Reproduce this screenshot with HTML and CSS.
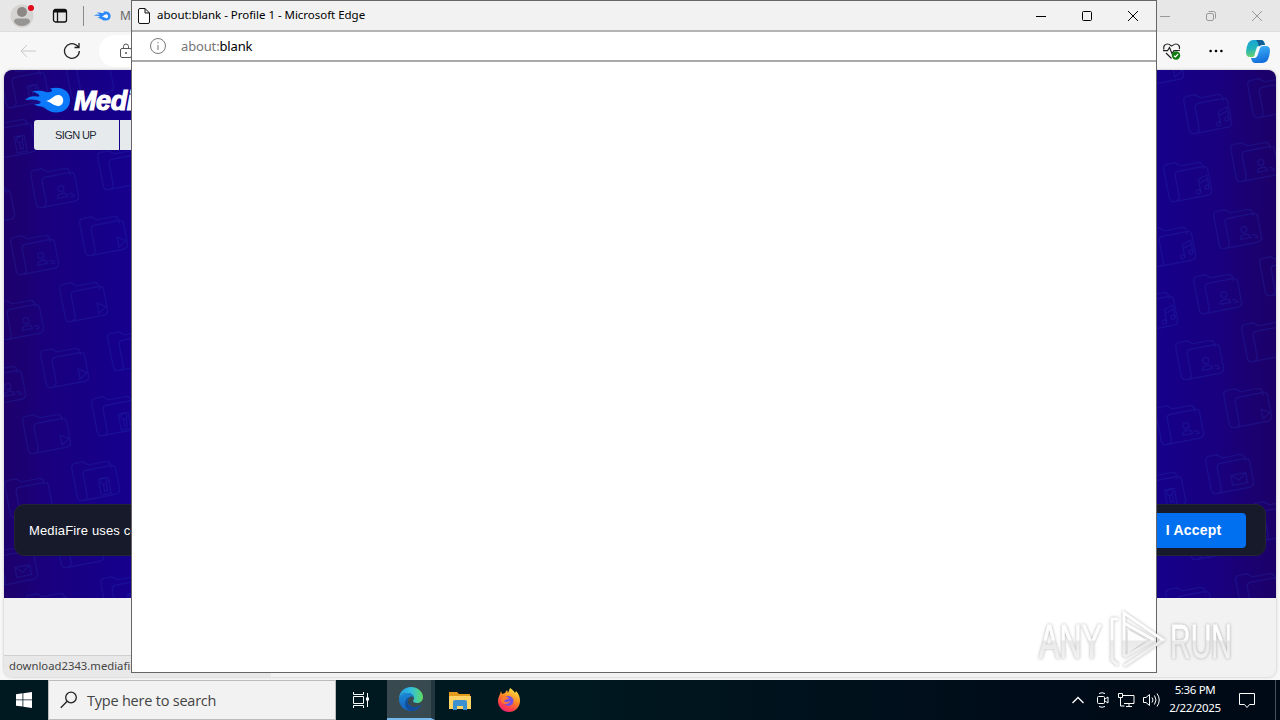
FILE: index.html
```html
<!DOCTYPE html>
<html lang="en">
<head>
  <meta charset="utf-8">
  <title>about:blank - Profile 1 - Microsoft Edge</title>
  <link rel="stylesheet" href="styles.css">
</head>
<body>
  <div class="desktop">
    <div class="browser">
      <div class="tabs">
        <div class="avatar">
          <svg width="24" height="24" viewBox="0 0 24 24"><circle cx="12" cy="12" r="11.5" fill="#d6d4d2"/><circle cx="12" cy="8" r="5" fill="#8b8886"/><path d="M4 18q0-3.500 3.500-3.500h9q3.500 0 3.500 3.500-3 4-8 4t-8-4z" fill="#979593"/></svg>
          <span class="dot"></span>
        </div>
        <svg class="workspaces" width="16" height="16" viewBox="0 0 16 16" fill="none" stroke="#111" stroke-width="1.300"><rect x="1.500" y="1.500" width="13" height="12.500" rx="2"/><path d="M2 3h12" stroke-width="3"/><path d="M5.500 4v10"/></svg>
        <span class="divider"></span>
        <svg class="favicon" width="17" height="14" viewBox="0 0 46 26"><use href="#flame"/></svg>
        <span class="tab-title">MediaFire</span>
        <div class="controls inactive">
          <svg width="46" height="32" viewBox="0 0 46 32"><path d="M18 16.500h10"/></svg>
          <svg width="46" height="32" viewBox="0 0 46 32"><rect x="18.500" y="13.500" width="7" height="7" rx="1.500"/><path d="M20.500 11.500h5a2 2 0 0 1 2 2v5"/></svg>
          <svg width="46" height="32" viewBox="0 0 46 32"><path d="M18 11l10 10m0-10l-10 10"/></svg>
        </div>
      </div>
      <div class="toolbar">
        <svg class="back" width="16" height="14" viewBox="0 0 16 14" fill="none" stroke="#c8c8c8"><path d="M16 7H1m6-6L1 7l6 6"/></svg>
        <svg class="reload" width="18" height="18" viewBox="0 0 18 18" fill="none" stroke="#222" stroke-width="1.300"><path d="M16.300 9a7.400 7.400 0 1 1-2.700-5.700L16 5.500M16 1v4.500h-4.500"/></svg>
        <div class="address">
          <svg width="14" height="16" viewBox="0 0 14 16" fill="none" stroke="#555"><rect x="1.500" y="5.500" width="11" height="9" rx="1.500"/><path d="M4.500 5V3.500a2.500 2.500 0 0 1 5 0V5"/><circle cx="7" cy="10" r=".6" fill="#555"/></svg>
        </div>
        <div class="tools">
          <svg width="18" height="18" viewBox="0 0 18 18" fill="none" stroke="#222" stroke-width="1.200"><path d="M1 7.500C0 4 2 2 4.500 2 7 2 8 4 8.700 4 9.500 4 10.500 2 13 2c2.500 0 4.200 2.500 3.200 5M0 8.700h4.500l2-3.200 2.500 6 2-3h6M3 11l5.500 5.500"/><circle cx="13" cy="13.500" r="4.200" fill="#107c10" stroke="none"/><path d="M11 13.700l1.400 1.300 2.700-3" stroke="#fff"/></svg>
          <svg width="14" height="4" viewBox="0 0 14 4"><circle cx="1.600" cy="2" r="1.300"/><circle cx="7" cy="2" r="1.300"/><circle cx="12.400" cy="2" r="1.300"/></svg>
          <svg width="24" height="23" viewBox="0 0 24 23">
            <defs>
              <linearGradient id="coA" x2=".2" y2="1"><stop offset="0" stop-color="#18a2d8"/><stop offset=".55" stop-color="#22b5bb"/><stop offset="1" stop-color="#68d070"/></linearGradient>
              <linearGradient id="coB" x2=".3" y2="1"><stop offset="0" stop-color="#42b9fa"/><stop offset="1" stop-color="#1570dc"/></linearGradient>
            </defs>
            <path d="M7 0h8q3 0 4 5h-3q-3 0-4 4l-2 6q-1 2-3 2H4q-4 0-4-5Q1 0 7 0z" fill="url(#coA)"/>
            <path d="M10 0h5q3 0 4 5h-3q-2 0-3 2-1-5-3-7z" fill="#125f95"/>
            <path d="M17 23H9q-3 0-4-5h3q3 0 4-4l2-6q1-2 3-2h3q4 0 4 5-1 12-7 12z" fill="url(#coB)"/>
            <path d="M11 7q1-1 3-1-1 1-2 5l-1 4q-1 2-2 3-1 0-2-1 2-1 2-4z" fill="#f4faff"/>
          </svg>
        </div>
      </div>
      <div class="page">
        <div class="hero">
          <svg class="pattern" width="1272" height="528" viewBox="4 70 1272 528" fill="none">
            <defs>
              <g id="folder"><path d="M-15 20q-5 0-5-5v-28q0-5 4-5h8l5 4h17q5 0 5 5v3M-15 20q5 0 5-5v-20q0-4 4-4h25q4 0 4 4v20q0 5-5 5z"/></g>
              <g id="person"><use href="#folder"/><circle cx="7" cy="5" r="3"/><path d="M2 14q0-4 5-4t5 4zM14 12q4-1 5 3h-4"/></g>
              <g id="play"><use href="#folder"/><path d="M14 7l8 5-8 5z"/></g>
              <g id="music"><use href="#folder"/><path d="M12 15V3l9-3v12M12 7l9-3"/><circle cx="10" cy="15" r="2"/><circle cx="19" cy="12" r="2"/></g>
              <g id="lock"><use href="#folder"/><path d="M4 18V2h10v16z"/><circle cx="9" cy="5" r="3"/><path d="M8 8v7h3V8"/></g>
              <g id="mail"><use href="#folder"/><path d="M2 5h15v10H2zl7 6 8-6"/></g>
            </defs>
            <g id="art" class="lines"></g>
          </svg>
          <div class="brand">
            <svg width="46" height="26" viewBox="0 0 46 26">
              <defs><g id="flame"><path d="M0 13C3 10 7 8.500 12 9.500 14 10 15 9 14 8 12 6 10 5 7 5c6-2 10-1 14 0 3 .5 5 0 6-1 0-1-1-2-2-2.500C37-1 45 4 45 13c0 8-6 12.500-14 12.500-8 0-10-5-15-6-3-.5-5-.5-7-2.500 3 .5 6 0 7-2C12 12 6 12 0 13z" fill="#0c78fa"/><path d="M21 14c5-1 8-6 12-6 7 0 7 11 0 11-4 0-7-4-12-5z" fill="#fff"/></g></defs>
              <use href="#flame"/>
            </svg>
            <span>MediaFire</span>
          </div>
          <div class="account"><span class="signup">SIGN UP</span><span class="login">LOG IN</span></div>
          <div class="consent">
            <span>MediaFire uses cookies</span>
            <button>I Accept</button>
          </div>
        </div>
        <div class="status">download2343.mediafire.com</div>
      </div>
    </div>

    <div class="taskbar">
      <div class="start"><svg width="16" height="16" viewBox="0 0 16 16" fill="#fff"><path d="M0 2.200L6.500 1.300v6.200H0zM7.300 1.200L16 0v7.500H7.300zM0 8.300h6.500v6.300L0 13.700zM7.300 8.300H16V16l-8.700-1.200z"/></svg></div>
      <div class="search">
        <svg width="18" height="18" viewBox="0 0 18 18" fill="none" stroke="#222" stroke-width="1.300"><circle cx="11" cy="6.500" r="5.300"/><path d="M7.200 10.300L.8 16.700"/></svg>
        <span>Type here to search</span>
      </div>
      <div class="task"><svg width="18" height="18" viewBox="0 0 18 18" fill="none" stroke="#fff"><path d="M1.500 1v2.500h10V1M1.500 17v-2.500h10V17M1.500 5.500h10v7h-10zM15.500 2v14"/><path d="M14 6.500h3v3h-3z" fill="#fff" stroke="none"/></svg></div>
      <div class="task active">
        <svg width="24" height="24" viewBox="0 0 24 24">
          <defs>
            <linearGradient id="edA" x2="1"><stop offset="0" stop-color="#2399dc"/><stop offset=".5" stop-color="#31bde0"/><stop offset="1" stop-color="#5fdc62"/></linearGradient>
            <linearGradient id="edB" y2="1" x2=".3"><stop offset="0" stop-color="#1c8bd8"/><stop offset="1" stop-color="#1560b8"/></linearGradient>
          </defs>
          <path d="M0 12C0 5 5 0 12 0s12 5 12 10c0 4-3 6-6 6-2 0-4-1-4-2s1-1 1-3c0-3-3-5-7-5-4 0-7 3-8 6z" fill="url(#edA)"/>
          <path d="M0 12c1-4 4-6 8-6 4 0 7 2 7 5-1-1-2-2-4-1-5 3-2 9 3 10 3 1 6-1 8-2-2 4-6 6-10 6C5 24 0 19 0 12z" fill="url(#edB)"/>
          <path d="M11 10c-5 3-2 9 3 10 3 1 6-1 8-2-2 4-6 6-10 6-8-2-7-13-1-14z" fill="#124d9b"/>
        </svg>
      </div>
      <div class="task"><svg width="22" height="19" viewBox="0 0 22 19"><path d="M0 1h8l2 2h11v5H0z" fill="#e29b1d"/><path d="M0 5h22v13H0z" fill="#fcd364"/><path d="M4 19v-8q0-2 2-2h10q2 0 2 2v8h-4v-4H8v4z" fill="#3b91cf"/></svg></div>
      <div class="task"><svg width="24" height="24" viewBox="0 0 24 24">
        <defs><linearGradient id="ff" x1=".8" x2=".3" y2="1"><stop offset="0" stop-color="#fff04a"/><stop offset=".45" stop-color="#ff8b22"/><stop offset=".8" stop-color="#ff3c4c"/><stop offset="1" stop-color="#e52374"/></linearGradient></defs>
        <path d="M4 3l1 3 3-1 2-3 1 3 2-5c2 1 4 3 5 5l1-2c3 3 4 6 4 10a11 11 0 0 1-22 0C1 9 3 7 4 3z" fill="url(#ff)"/><circle cx="11.500" cy="13" r="5" fill="#7650e1"/><path d="M5 9c3-2 5 0 7 1-1 2-4 1-5 3 2 2 4 1 6 0-1 4-7 4-9 0z" fill="#ff7930"/></svg></div>
      <div class="tray">
        <svg width="12" height="8" viewBox="0 0 12 8"><path d="M.5 7L6 1.500 11.500 7" stroke-width="1.300"/></svg>
        <svg width="12" height="16" viewBox="0 0 12 16"><rect x=".5" y="4.500" width="7" height="7" rx="1"/><path d="M8 7l3-2v6L8 9M2 1.500Q5 0 8 1.500M2 14.500Q5 16 8 14.500"/></svg>
        <svg width="17" height="14" viewBox="0 0 17 14"><path d="M5 2.500h11v8H6M8 13.500h6M11 10.500v3M.5.500h4v4h-4zM2.500 5v8h4"/></svg>
        <svg width="17" height="14" viewBox="0 0 17 14"><path d="M.5 4.500H3l3.500-3v11L3 9.500H.5zM9 4.500q2 2.500 0 5M11.500 2.500q3 4.500 0 9M14 .500q4.500 6.500 0 13"/></svg>
      </div>
      <div class="clock"><span>5:36 PM</span><span>2/22/2025</span></div>
      <svg class="notice" width="17" height="17" viewBox="0 0 17 17" fill="none" stroke="#fff"><path d="M.5 1.500h15v11h-5l-2.500 3-2.500-3h-5z"/></svg>
      <div class="peek"></div>
    </div>

    <div class="popup">
      <div class="titlebar">
        <svg width="12" height="16" viewBox="0 0 12 16" fill="#fff" stroke="#111"><path d="M.5 2q0-1.500 1.500-1.500h5L11.500 5v9q0 1.500-1.500 1.500H2Q.5 15.500.5 14zM7 .5V5h4.500"/></svg>
        <span>about:blank - Profile 1 - Microsoft Edge</span>
        <div class="controls">
          <svg width="46" height="30" viewBox="0 0 46 30"><path d="M18 15.500h10"/></svg>
          <svg width="46" height="30" viewBox="0 0 46 30"><rect x="18.500" y="10.500" width="9" height="9" rx="1"/></svg>
          <svg width="46" height="30" viewBox="0 0 46 30"><path d="M18 10l10 10m0-10L18 20"/></svg>
        </div>
      </div>
      <div class="location">
        <svg width="16" height="16" viewBox="0 0 16 16" fill="none" stroke="#777"><circle cx="8" cy="8" r="7.500"/><path d="M8 7v5M8 4v1.300"/></svg>
        <span><i>about:</i>blank</span>
      </div>
    </div>

    <svg class="watermark" width="216" height="66" viewBox="0 0 216 66">
      <defs><linearGradient id="wm" gradientUnits="userSpaceOnUse" x1="0" y1="10" x2="0" y2="56"><stop offset="0" stop-color="#fff"/><stop offset=".48" stop-color="#fdfdfd"/><stop offset=".5" stop-color="#e9e9e9"/><stop offset="1" stop-color="#f5f5f5"/></linearGradient></defs>
      <text x="3" y="50" textLength="63" lengthAdjust="spacingAndGlyphs">ANY</text>
      <text x="134" y="50" textLength="62" lengthAdjust="spacingAndGlyphs">RUN</text>
      <path d="M88 48V5l39 27-39 26M82 11h-6v41l6 5M88 15l30 17M88 49l30-17" fill="none" stroke="url(#wm)" stroke-width="3"/>
      <path d="M92 22l18 10-18 13z"/>
    </svg>
  </div>

  <script>
    // type, center x, center y
    var folders = [
      ['lock', 25, 87], ['folder', 90, 78], ['lock', 12, 138], ['folder', 122, 169],
      ['person', 55, 187], ['folder', -9, 205], ['play', 104, 235], ['person', 35, 254],
      ['play', 84, 301], ['person', 20, 319], ['folder', 132, 350], ['play', 65, 367],
      ['person', 2, 385], ['lock', 116, 415], ['play', 47, 433], ['lock', 96, 480],
      ['folder', 29, 497], ['folder', 80, 547], ['mail', 14, 565], ['lock', 125, 595], ['folder', 50, 612],
      ['play', 1160, 65], ['music', 1208, 113], ['folder', 1272, 97], ['person', 1255, 161],
      ['music', 1188, 181], ['music', 1172, 246], ['person', 1238, 228], ['person', 1218, 293],
      ['folder', 1284, 275], ['music', 1154, 311], ['person', 1200, 359], ['folder', 1266, 341],
      ['person', 1180, 424], ['play', 1248, 407], ['mail', 1230, 473], ['lock', 1162, 491],
      ['lock', 1277, 520], ['folder', 1210, 539], ['folder', 1260, 592], ['folder', 1190, 606]
    ];
    document.getElementById('art').innerHTML = folders.map(function (f) {
      return '<use href="#' + f[0] + '" transform="translate(' + (f[1] - 2) + ' ' + (f[2] - 2) + ') rotate(-11)"/>';
    }).join('');
  </script>
</body>
</html>
```
FILE: styles.css
```css
* {
  box-sizing: border-box;
}

body {
  margin: 0;
  font-family: "Noto Sans", "Open Sans", sans-serif;
}

svg {
  display: block;
  flex: none;
}

.desktop {
  position: relative;
  display: flex;
  flex-direction: column;
  width: 1280px;
  height: 720px;
  overflow: hidden;
  white-space: nowrap;
}

.browser {
  display: flex;
  flex-direction: column;
  height: 680px;
  background: #f7f7f7;
}

.tabs {
  display: flex;
  align-items: center;
  height: 32px;
  padding-left: 10px;
  background: #e7e7e7;
  border-bottom: 1px solid #dedede;
}

.avatar {
  position: relative;
}

.dot {
  position: absolute;
  top: 1px;
  left: 18px;
  width: 6px;
  height: 6px;
  border-radius: 50%;
  background: #e00b1c;
}

.workspaces {
  margin-left: 18px;
}

.divider {
  width: 1px;
  height: 20px;
  margin: 0 10px 0 15px;
  background: #8a8a8a;
}

.favicon {
  opacity: .85;
}

.tab-title {
  width: 12px;
  margin-left: 9px;
  overflow: hidden;
  font-size: 12px;
  color: #666;
}

.controls {
  display: flex;
  margin-left: auto;
  fill: none;
  stroke: #000;
}

.inactive {
  stroke: #999;
}

.toolbar {
  display: flex;
  align-items: center;
  height: 38px;
  padding-left: 20px;
}

.reload {
  margin-left: 27px;
}

.address {
  display: flex;
  align-items: center;
  width: 1020px;
  height: 32px;
  margin-left: 18px;
  padding-left: 20px;
  border-radius: 16px;
  background: #fff;
}

.tools {
  display: flex;
  align-items: center;
  margin-left: auto;
  padding-right: 10px;
}

.tools svg:nth-child(2) {
  margin: 0 23px 0 28px;
}

.page {
  position: relative;
  width: 1272px;
  height: 607px;
  margin-left: 4px;
  border-radius: 8px;
  overflow: hidden;
  background: #f2f2f2;
  box-shadow: 0 0 3px #bbb;
}

.hero {
  position: relative;
  display: flex;
  flex-direction: column;
  height: 528px;
  background: linear-gradient(90deg, #1d006b, #190080 4%, #15008f 11%, #15008f 89%, #190080 95%, #1c0068);
}

.pattern {
  position: absolute;
  top: 0;
  left: 0;
}

.lines {
  stroke: #2635b5;
  stroke-opacity: .26;
  stroke-width: 1.4;
}

.brand {
  position: relative;
  display: flex;
  align-items: center;
  height: 26px;
  margin: 17px 0 0 21px;
  color: #fff;
  font: italic bold 27px "Liberation Sans", sans-serif;
  letter-spacing: -.4px;
}

.brand span {
  margin: 2px 0 0 3px;
  -webkit-text-stroke: 1.1px #fff;
}

.account {
  position: relative;
  display: flex;
  gap: 1px;
  margin: 7px 0 0 30px;
  font: 11px/30px "Liberation Sans", sans-serif;
  letter-spacing: -.6px;
  color: #222835;
}

.account span {
  width: 85px;
  text-align: center;
  background: #e7eaed;
}

.account .signup {
  padding-right: 2px;
  border-radius: 3px 0 0 3px;
}

.consent {
  position: relative;
  display: flex;
  align-items: center;
  justify-content: space-between;
  height: 52px;
  margin: auto 10px 42px;
  padding: 0 20px 0 14px;
  border: 1px solid #242437;
  border-radius: 10px;
  background: #171a2a;
  color: #fff;
  font: 13px "Liberation Sans", sans-serif;
  letter-spacing: .15px;
}

.consent button {
  width: 106px;
  height: 35px;
  margin-right: -1px;
  padding: 0 0 0 1px;
  border: none;
  border-radius: 4px;
  background: #0070f0;
  color: #fff;
  font: bold 14px "Liberation Sans", sans-serif;
  letter-spacing: .2px;
}

.status {
  position: absolute;
  bottom: 0;
  left: 0;
  width: 267px;
  height: 22px;
  padding-left: 5px;
  border-top: 1px solid #d0d0d0;
  background: #e8e8e8;
  color: #444;
  font-size: 11.3px;
  line-height: 20px;
}

.taskbar {
  display: flex;
  align-items: center;
  height: 40px;
  background: linear-gradient(90deg, #001820, #001820 45%, #000c19 80%, #000916);
  color: #fff;
}

.start {
  display: flex;
  align-items: center;
  justify-content: center;
  width: 48px;
}

.search {
  display: flex;
  align-items: center;
  width: 288px;
  height: 40px;
  padding-left: 11px;
  border: 1px solid #bbb;
  background: #f2f2f2;
  color: #444;
  font-size: 14.5px;
}

.search span {
  margin-left: 9px;
  font-family: "Open Sans", sans-serif;
  letter-spacing: -.22px;
}

.task {
  display: flex;
  align-items: center;
  justify-content: center;
  width: 49px;
  height: 40px;
}

.active {
  margin-left: 2px;
  padding-left: 4px;
  width: 48px;
  border-right: 4px solid #223740;
  border-bottom: 2px solid #76b9ed;
  background: #38494f;
}

.tray {
  display: flex;
  align-items: center;
  gap: 8px;
  margin-left: auto;
  fill: none;
  stroke: #fff;
}

.tray svg:nth-child(2) {
  margin: 0 1px 0 5px;
}

.clock {
  display: flex;
  flex-direction: column;
  align-items: center;
  width: 54px;
  margin-left: 8px;
  font-size: 11.5px;
  line-height: 18px;
  letter-spacing: -.35px;
}

.clock span {
  position: relative;
  top: -1px;
}

.notice {
  margin: 1px 19px 0 17px;
}

.peek {
  width: 5px;
  height: 40px;
  border-left: 1px solid #465059;
}

.popup {
  position: absolute;
  top: 0;
  left: 131px;
  width: 1026px;
  height: 673px;
  border: 1px solid #686468;
  background: #fff;
}

.titlebar {
  display: flex;
  align-items: center;
  height: 31px;
  padding-left: 6px;
  border-bottom: 2px solid #b3b3b3;
  background: #f2f2f2;
  color: #000;
  font-size: 11.5px;
}

.titlebar span {
  margin: -2px 0 0 7px;
  letter-spacing: -.03px;
}

.location {
  display: flex;
  align-items: center;
  height: 30px;
  padding-left: 18px;
  border-bottom: 2px solid #a9a9a9;
  color: #000;
  font-size: 13px;
}

.location span {
  margin-left: 15px;
  letter-spacing: -.15px;
}

.location i {
  font-style: normal;
  color: #767676;
}

.watermark {
  position: absolute;
  top: 608px;
  left: 1036px;
  fill: url(#wm);
  font: 48px "Liberation Sans", sans-serif;
  stroke: url(#wm);
  stroke-width: .8;
  filter: drop-shadow(0 0 1.5px rgba(0, 0, 0, .3));
}
```
